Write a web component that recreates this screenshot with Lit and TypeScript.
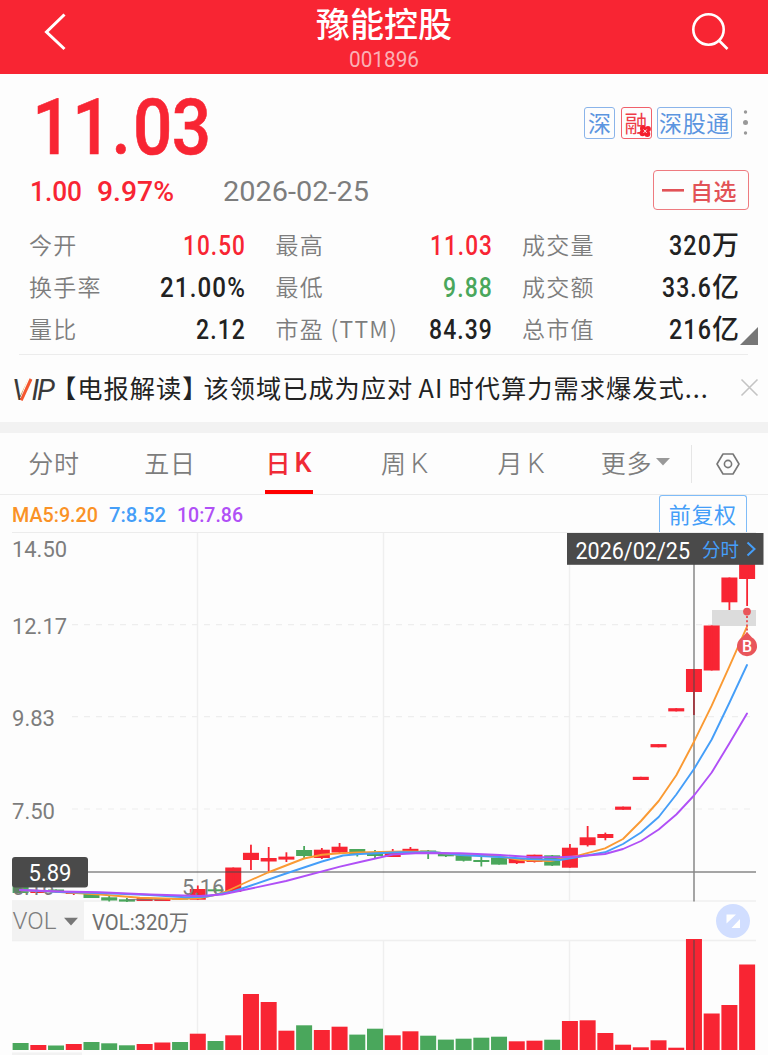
import { LitElement, html, svg, css } from "lit";
import { customElement } from "lit/decorators.js";

const num = (text: string, width: number, kind: string, height = 30, base = 24) => html`
  <svg class="num ${kind}" width=${width} height=${height}>
    <text x="0" y=${base} textLength=${width} lengthAdjust="spacingAndGlyphs">${text}</text>
  </svg>`;

const RED = "#f82533";
const GREEN = "#4aa75c";
const X0 = 20.6;
const STEP = 17.72;
const BODY = 16;

/* [rising, body top, body bottom, wick top, wick bottom, volume top] */
type Candle = [number, number, number, number, number, number];
const candles: Candle[] = [
  [0, 884, 893, 884, 893, 1043],
  [1, 890.5, 893, 890.5, 893, 1045],
  [0, 889.5, 891.5, 889.5, 893, 1045.5],
  [1, 892, 894, 892, 895, 1044],
  [0, 893, 898, 893, 898, 1042],
  [0, 897.3, 900.5, 896, 901.5, 1043.3],
  [0, 899.3, 901.6, 898, 902, 1045.3],
  [1, 898, 901, 897, 901, 1044],
  [1, 898.6, 901, 898, 901, 1042.5],
  [0, 898.3, 899.6, 898, 899.6, 1042],
  [1, 889, 899.7, 885.5, 899.7, 1033.7],
  [0, 889.3, 891.3, 888, 892.5, 1041],
  [1, 867.5, 892, 867.5, 892, 1035.3],
  [1, 852.8, 860, 844.7, 870, 994],
  [1, 858, 861.5, 847, 871.3, 1002],
  [1, 856.6, 859.6, 852.3, 862, 1030.7],
  [0, 850, 856, 846, 858.5, 1025.3],
  [1, 849.7, 858, 848, 859, 1030],
  [1, 846.7, 852.5, 843, 854, 1026.7],
  [0, 849, 854, 849, 856.5, 1034.6],
  [0, 852, 856, 850, 858.5, 1028.7],
  [1, 853, 857, 849, 857, 1035.3],
  [1, 848.8, 852, 847, 852, 1031.3],
  [0, 850.5, 853, 850, 859, 1035.7],
  [0, 853.5, 856.3, 853, 857, 1039.6],
  [0, 855, 860.8, 855, 861.5, 1038.7],
  [0, 860, 862, 857, 866.5, 1037.7],
  [0, 857.5, 864.6, 857, 864.6, 1036.7],
  [1, 858.5, 863.2, 858, 864, 1041.3],
  [1, 854.7, 862, 854.7, 862.5, 1040.7],
  [0, 855.3, 865.6, 855, 866, 1039.7],
  [1, 847.7, 867.7, 844, 867.7, 1021],
  [1, 837.3, 845.2, 826, 846.5, 1020.3],
  [1, 834, 838, 832.6, 840.3, 1033],
  [1, 806.6, 809.8, 806.6, 809.8, 1044.7],
  [1, 776.8, 780, 776.8, 780, 1047.3],
  [1, 744.1, 747.3, 744.1, 747.3, 1040.3],
  [1, 708.2, 711.4, 708.2, 711.4, 1047.7],
  [1, 669, 692, 669, 715, 939],
  [1, 625.5, 670.5, 625.5, 670.5, 1013.5],
  [1, 577.5, 602.3, 577.5, 610, 1005],
  [1, 550, 579, 550, 606, 964.5],
];

const averages = [
  { color: "#fa9a33", points: "20,890 60,892 100,894.5 140,897.8 180,899 200,898 215,895 225,892 251,880 268,872.5 286,865.5 304,858.5 322,854.8 340,853.2 358,852.4 403,851.4 430,851.8 460,855 495,855.5 520,860 550,861 569,857.5 578,855.7 605,848.3 623,839 641,821 658.7,801 676.3,775.3 694,741.7 711.7,705.7 729.3,666.7 747,626.7" },
  { color: "#459ef8", points: "20,890 60,892 100,893 150,895 185,897.3 205,896.8 233,891.5 251,885.5 286,873.5 304,867.5 322,861.5 343,855.5 360,854 400,852.2 435,852.3 460,855 500,857 530,859 560,860 578,857 605,852.3 623,844 641,832.5 658.7,817 676.3,794.5 694,769 711.7,739.5 729.3,703 747,665" },
  { color: "#b050f6", points: "20,890 60,891.5 100,892.3 150,894.5 200,896 222,894.5 251,888.5 286,881 340,866.7 360,862 393,854.5 420,853 460,853.2 500,855 530,857 560,857.3 578,856.3 605,854 623,849 641,841 658.7,829.5 676.3,814.5 694,795.5 711.7,772.5 729.3,743.5 747,713.5" },
];

@customElement("kline-chart")
class KlineChart extends LitElement {
  static styles = css`
    :host { display: block; }
    svg { display: block; }
    text { font-family: Roboto, "Noto Sans CJK SC", sans-serif; }
    .axis { font-size: 22.5px; fill: #7d7d7d; }
    .white { font-size: 24px; fill: #fff; }
    .link { font-size: 19px; fill: #459ef8; font-family: "Noto Sans CJK SC", sans-serif; }
    .badge { font-size: 16px; font-weight: 500; fill: #fff; text-anchor: middle; }
    .vol { font-size: 24px; fill: #7d7d7d; font-weight: 300; }
    .volnum { font-size: 22px; fill: #6f6f6f; }
  `;
  fit(text: string, x: number, y: number, w: number, cls: string) {
    return svg`<text class=${cls} x=${x} y=${y} textLength=${w} lengthAdjust="spacingAndGlyphs">${text}</text>`;
  }
  render() {
    return html`<svg width="768" height="522" viewBox="0 533 768 522">
      <g stroke="#efefef" stroke-width="1.4">
        ${[197.5, 383.5, 569.5].map((x) => svg`<path d="M${x} 533V901M${x} 940.5V1050" />`)}
        <path d="M12 901H756M12 940.5H756" />
      </g>
      <g stroke="#eeeeee" stroke-width="1.2" stroke-dasharray="6 6">
        ${[624.7, 716.7, 809].map((y) => svg`<path d="M72 ${y}H750" />`)}
      </g>
      <rect x="712" y="610" width="44" height="16" fill="#dcdcdc" />
      ${this.fit("14.50", 12, 556.5, 55, "axis")}
      ${this.fit("12.17", 12, 634, 55, "axis")}
      ${this.fit("9.83", 12, 726, 43, "axis")}
      ${this.fit("7.50", 12, 818.5, 43, "axis")}
      ${candles.map(([up, top, bottom, high, low, vol], i) => {
        const c = X0 + STEP * i;
        return svg`<g fill=${up ? RED : GREEN}>
          <rect x=${c - BODY / 2} y=${top} width=${BODY} height=${bottom - top} />
          <rect x=${c - 0.9} y=${high} width="1.8" height=${low - high} />
          <rect x=${c - BODY / 2} y=${vol} width=${BODY} height=${1050 - vol} />
        </g>`;
      })}
      ${this.fit("5.16", 182, 895, 42, "axis")}
      ${this.fit("5.16", 12, 894.5, 42, "axis")}
      <circle cx="17.5" cy="889" r="4" fill="#5e7f63" />
      <path d="M127 899.7H165" stroke="#777" stroke-width="1" />
      <path d="M12 872H756M694 533V901.5M694 940V1050" fill="none" stroke="#4a4a4a" stroke-opacity=".65" stroke-width="1.5" />
      ${averages.map((a) => svg`<polyline points=${a.points} fill="none" stroke=${a.color} stroke-width="1.9" stroke-linejoin="round" stroke-linecap="round" />`)}
      <circle cx="747" cy="611.6" r="3.9" fill="#e9555a" />
      <path d="M747 616V634" stroke="#e9555a" stroke-width="2" stroke-dasharray="2 2.2" />
      <path d="M747 632L752 637.5A10 10 0 1 1 742 637.5Z" fill="#e9555a" />
      <text class="badge" x="747" y="652">B</text>
      <rect x="567" y="533" width="196.5" height="31.8" fill="#4a4a4a" />
      ${this.fit("2026/02/25", 575.5, 558.5, 114.5, "white")}
      ${this.fit("分时", 702, 556.5, 37, "link")}
      <path d="M747.5 542.5L754.5 549L747.5 555.5" fill="none" stroke="#459ef8" stroke-width="2" />
      <rect x="12" y="857" width="76" height="30.5" rx="3" fill="#4a4a4a" />
      ${this.fit("5.89", 28.5, 880.5, 43, "white")}
      <rect x="12" y="901" width="72" height="39.5" fill="#f2f2f2" />
      ${this.fit("VOL", 12.5, 929, 44, "vol")}
      <path d="M64 917.8H78L71 925.5Z" fill="#777" />
      ${this.fit("VOL:320万", 92, 929.8, 97, "volnum")}
      <circle cx="733" cy="921" r="17" fill="#d1deff" />
      <path d="M726.5 914.5H736L726.5 923.5ZM740 919V928H731.5Z" fill="#fff" />
      <rect x="12" y="1052.5" width="70" height="3" fill="#f2f2f2" />
    </svg>`;
  }
}

@customElement("app-root")
class AppRoot extends LitElement {
  static styles = css`
    :host { display: block; width: 768px; height: 1055px; overflow: hidden; background: #fdfdfd;
      font-family: "Noto Sans CJK SC", sans-serif; color: #7d7d7d; }
    * { box-sizing: border-box; }
    svg { display: block; flex: none; overflow: visible; }
    .num text { font-family: Roboto, "Noto Sans CJK SC", sans-serif; font-size: 27.5px; fill: currentColor; }
    .num.code text { font-size: 22px; }
    .num.price text { font-size: 77px; font-weight: 500; stroke: currentColor; stroke-width: .6px; }
    .num.val text { font-weight: 500; font-size: 27px; }
    .num.chg text { font-weight: 500; font-size: 28px; }
    .num.date text { font-size: 28px; }
    .num.ma text { font-size: 21px; font-weight: 500; }
    .red { color: #f82533; } .green { color: #4aa75c; } .dark { color: #222; }
    header { height: 73.5px; background: #f82533; color: #fff; display: grid;
      grid-template-columns: 100px 1fr 100px; }
    .title { display: flex; flex-direction: column; align-items: center; }
    .name { font-size: 34px; line-height: 46px; font-weight: 500; }
    .code { color: #fbb0b5; }
    .top { height: 95px; display: flex; padding-left: 34px; }
    .tags { display: flex; margin-left: auto; padding: 33.5px 18px 0 0; height: 66px; }
    .tag { height: 32px; border: 1.5px solid #8ab4ea; border-radius: 3px; color: #5b95e0;
      font-size: 23px; line-height: 29px; text-align: center; width: 31px; margin-right: 5.5px; }
    .tag.rz { border-color: #f0606b; color: #ee3c48; position: relative; }
    .tag.wide { width: 75px; letter-spacing: .6px; margin-right: 10px; }
    .rz svg { position: absolute; right: 0; bottom: 1px; }
    .change { height: 56px; display: flex; align-items: center; padding: 0 19px 0 30px; }
    .fav { margin-left: auto; height: 40.5px; width: 96.5px; border: 1.5px solid #ee7b80; border-radius: 4px;
      color: #e25257; display: flex; align-items: center; font-size: 23px; padding-left: 8.5px; gap: 6px;
      font-weight: 500; letter-spacing: .6px; margin-top: -13px; white-space: nowrap; }
    .gap1 { width: 14.5px; } .gap2 { width: 49.5px; }
    .change .num { margin-top: -9px; }
    .stats { display: grid; grid-template-columns: 217px 217px 217px; column-gap: 29.5px; grid-auto-rows: 42px;
      padding-left: 29px; height: 130.5px; }
    .cell { display: flex; justify-content: space-between; align-items: flex-start; font-size: 23px;
      font-weight: 350; letter-spacing: 1.3px; line-height: 38px; white-space: nowrap; }
    .v { display: flex; align-items: center; height: 41px; }
    .unit { font-size: 27px; line-height: 34px; font-weight: 500; letter-spacing: 0; margin-top: -2px; }
    .corner { margin: -28px 0 0 740px; }
    .rule { height: 1px; background: #ececec; margin: 9px 20px 0 19px; }
    .news { height: 67px; margin-left: 13px; display: flex; align-items: center; color: #222;
      font-size: 25.2px; letter-spacing: 1.05px; white-space: nowrap; }
    .vip text { font: italic 400 29px Roboto, sans-serif; fill: #3a3a3a; letter-spacing: 0; }
    .headline { display: flex; align-items: center; width: 688px; height: 60px; padding-bottom: 3px; }
    .lb { margin-left: -2px; } .rest { margin-left: -5px; word-spacing: -1.5px; }
    .close { margin-left: auto; margin-right: 10px; margin-top: -2px; }
    .band { height: 11px; background: #f2f2f2; }
    .tabs { height: 62px; display: grid; grid-template-columns: 108px 124px 115px 115px 118px 111px 77px;
      align-items: stretch; border-bottom: 1px solid #ececec; font-size: 25px;
      letter-spacing: .8px; line-height: 56px; font-weight: 350; }
    .tab { text-align: center; display: flex; justify-content: center; align-items: center; gap: 4px; height: 61px; padding-bottom: 3px; }
    .tab.on { color: #f02b36; font-weight: 500; border-bottom: 4px solid #f00; width: 48px; justify-self: center; padding-bottom: 0; margin-left: -2px; gap: 3px; }
    .tab span { font-family: Roboto, sans-serif; font-weight: 300; letter-spacing: 0; font-size: 27px; padding-top: 3px; }
    .tab.on span { font-weight: 500; }
    .gear { border-left: 1px solid #e6e6e6; height: 38px; align-self: center; display: flex; align-items: center; padding-left: 24px; }
    .mas { height: 38px; border-bottom: 1px solid #ececec; margin: 0 12px; display: flex; align-items: center; }
    .mas .num { margin-right: 11px; }
    .o { color: #fa9226; } .b { color: #459ef8; } .p { color: #b050f6; }
    .adj { margin-left: auto; margin-right: 9px; width: 88.5px; height: 37.5px; border: 1.5px solid #7fbcf8; border-bottom: 0;
      border-radius: 3px 3px 0 0; color: #459ef8; font-size: 22px; letter-spacing: .6px; text-align: center; line-height: 34px; }
  `;
  cell(label: unknown, value: string, w: number, tone: string, unit = "") {
    return html`<div class="cell"><span>${label}</span><span class="v ${tone}">
      ${num(value, w, "val", 30, 24.5)}${unit ? html`<span class="unit">${unit}</span>` : ""}</span></div>`;
  }
  render() {
    return html`
      <header>
        <svg width="100" height="73" fill="none" stroke="#fff" stroke-width="3"><path d="M64.5 14.5L46.5 32L64.5 49" /></svg>
        <div class="title"><div class="name">豫能控股</div><div class="code">${num("001896", 70, "code", 24, 21)}</div></div>
        <svg width="100" height="73" fill="none" stroke="#fff" stroke-width="2.6"><circle cx="40.5" cy="29.5" r="15.2" /><path d="M51 40.5L59.5 49" /></svg>
      </header>
      <div class="top">
        <div class="red"><svg class="num price" width="180" height="95"><text transform="scale(.9 1)" x="-2 42.5 86 110 153" y="79.7">11.03</text></svg></div>
        <div class="tags">
          <div class="tag">深</div>
          <div class="tag rz">融<svg width="12" height="12" viewBox="0 0 12 12"><g fill="#f4202e"><circle cx="4" cy="3.5" r="3" /><circle cx="9" cy="4" r="2.9" /><circle cx="3.5" cy="8.3" r="3" /><circle cx="8.3" cy="9" r="3" /></g><path d="M4.5 4.5L7.7 7.9M7.7 4.5L4.5 7.9" stroke="#fff" stroke-width=".9" /></svg></div>
          <div class="tag wide">深股通</div>
          <svg width="8" height="32" fill="#999"><circle cx="3.5" cy="5" r="1.7" /><circle cx="3.5" cy="15.5" r="2.5" /><circle cx="3.5" cy="26" r="1.7" /></svg>
        </div>
      </div>
      <div class="change">
        <div class="red">${num("1.00", 52, "chg")}</div><div class="gap1"></div>
        <div class="red">${num("9.97%", 77, "chg")}</div><div class="gap2"></div>
        <div>${num("2026-02-25", 146, "date")}</div>
        <div class="fav"><svg width="22" height="4"><rect y="1" width="22" height="2.6" fill="#e25257" /></svg>自选</div>
      </div>
      <div class="stats">
        ${this.cell("今开", "10.50", 63, "red")}
        ${this.cell("最高", "11.03", 63, "red")}
        ${this.cell("成交量", "320", 43, "dark", "万")}
        ${this.cell("换手率", "21.00%", 86, "dark")}
        ${this.cell("最低", "9.88", 50, "green")}
        ${this.cell("成交额", "33.6", 50, "dark", "亿")}
        ${this.cell("量比", "2.12", 50, "dark")}
        ${this.cell("市盈 (TTM)", "84.39", 64, "dark")}
        ${this.cell("总市值", "216", 43, "dark", "亿")}
      </div>
      <svg class="corner" width="18" height="18"><path d="M0 18H18V0Z" fill="#777" /></svg>
      <div class="rule"></div>
      <div class="news">
        <svg class="vip" width="40" height="26"><text x="-1 18.5 24" y="24">VIP</text><path d="M9.3 23L17.5 3" stroke="#fdfdfd" stroke-width="5" /><path d="M8.2 24.3L18 3" stroke="#f4572f" stroke-width="3" /></svg>
        <div class="headline"><span class="lb">【电报解读】</span><span class="rest">该领域已成为应对 AI 时代算力需求爆发式...</span></div>
        <svg class="close" width="17" height="17" stroke="#c4c4c4" stroke-width="1.6"><path d="M.5 .5L16.5 16.5M16.5 .5L.5 16.5" /></svg>
      </div>
      <div class="band"></div>
      <div class="tabs">
        <div class="tab">分时</div><div class="tab">五日</div>
        <div class="tab on">日<span>K</span></div>
        <div class="tab">周<span>K</span></div><div class="tab">月<span>K</span></div>
        <div class="tab">更多<svg width="14" height="8"><path d="M0 0H14L7 7.5Z" fill="#999" /></svg></div>
        <div class="gear"><svg width="24" height="24" fill="none" stroke="#777" stroke-width="1.6"><path d="M7 2H17L23 12L17 22H7L1 12Z" stroke-linejoin="round" /><circle cx="12" cy="12" r="3.6" /></svg></div>
      </div>
      <div class="mas">
        <div class="o">${num("MA5:9.20", 86, "ma", 24, 20)}</div>
        <div class="b">${num("7:8.52", 57, "ma", 24, 20)}</div>
        <div class="p">${num("10:7.86", 66, "ma", 24, 20)}</div>
        <div class="adj">前复权</div>
      </div>
      <kline-chart></kline-chart>
    `;
  }
}
